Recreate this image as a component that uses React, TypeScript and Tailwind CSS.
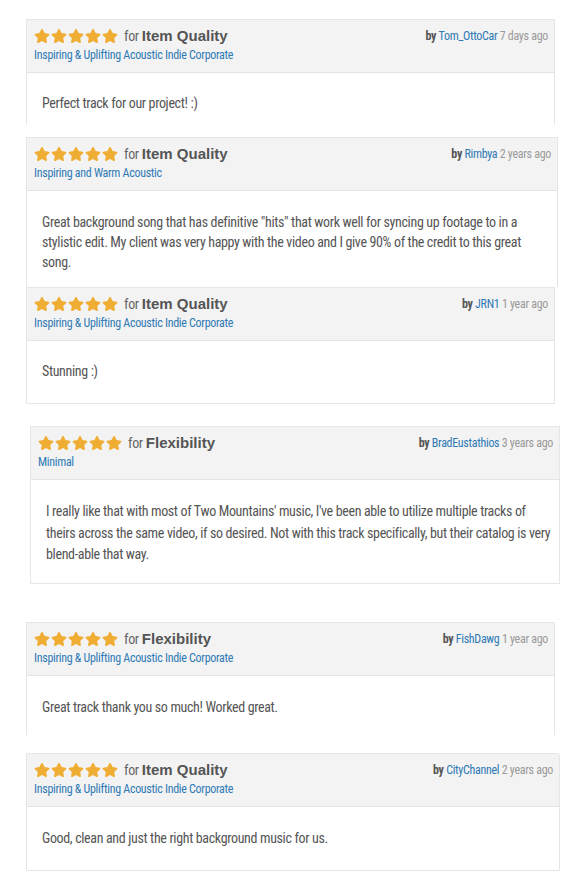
import { FaStar } from "react-icons/fa";

interface IReview {
  id: number;
  aspect: string;
  track: string;
  author: string;
  when: string;
  body: string;
  box: string;
  bodyBox: string;
}

const reviews: IReview[] = [
  {
    id: 1,
    aspect: "Item Quality",
    track: "Inspiring & Uplifting Acoustic Indie Corporate",
    author: "Tom_OttoCar",
    when: "7 days ago",
    body: "Perfect track for our project! :)",
    box: "mt-[19px] ml-[26px] w-[529px] border-b-0",
    bodyBox: "h-[52px] pt-[20px] pr-[15px] leading-[20px]"
  },
  {
    id: 2,
    aspect: "Item Quality",
    track: "Inspiring and Warm Acoustic",
    author: "Rimbya",
    when: "2 years ago",
    body: 'Great background song that has definitive "hits" that work well for syncing up footage to in a stylistic edit. My client was very happy with the video and I give 90% of the credit to this great song.',
    box: "mt-[12px] ml-[26px] w-[532px] border-b-0",
    bodyBox: "h-[96px] pt-[21px] pr-[15px] leading-[20px]"
  },
  {
    id: 3,
    aspect: "Item Quality",
    track: "Inspiring & Uplifting Acoustic Indie Corporate",
    author: "JRN1",
    when: "1 year ago",
    body: "Stunning :)",
    box: "mt-0 ml-[26px] w-[529px]",
    bodyBox: "h-[62px] pt-[20px] pr-[15px] leading-[20px]"
  },
  {
    id: 4,
    aspect: "Flexibility",
    track: "Minimal",
    author: "BradEustathios",
    when: "3 years ago",
    body: "I really like that with most of Two Mountains' music, I've been able to utilize multiple tracks of theirs across the same video, if so desired. Not with this track specifically, but their catalog is very blend-able that way.",
    box: "mt-[22px] ml-[30px] w-[530px]",
    bodyBox: "h-[103px] pt-[21px] pr-[6px] leading-[21.5px]"
  },
  {
    id: 5,
    aspect: "Flexibility",
    track: "Inspiring & Uplifting Acoustic Indie Corporate",
    author: "FishDawg",
    when: "1 year ago",
    body: "Great track thank you so much! Worked great.",
    box: "mt-[38px] ml-[26px] w-[529px] border-b-0",
    bodyBox: "h-[59px] pt-[21px] pr-[15px] leading-[20px]"
  },
  {
    id: 6,
    aspect: "Item Quality",
    track: "Inspiring & Uplifting Acoustic Indie Corporate",
    author: "CityChannel",
    when: "2 years ago",
    body: "Good, clean and just the right background music for us.",
    box: "mt-[18px] ml-[26px] w-[534px] rounded-tr-[3px]",
    bodyBox: "h-[63px] pt-[21px] pr-[15px] leading-[20px]"
  }
];

const Stars = () => (
  <span className="flex items-center gap-[1px] text-[#f0ad33]">
    {[0, 1, 2, 3, 4].map((i) => (
      <FaStar key={i} className="h-[16px] w-[16px]" />
    ))}
  </span>
);

const ReviewCard = ({ review }: { review: IReview }) => (
  <div className={`border border-[#e6e6e6] bg-white ${review.box}`}>
    <div className="flex h-[53px] justify-between border-b border-[#dfe6ea] bg-[#f3f3f3] pl-[7px] pr-[6px] pt-[6px]">
      <div>
        <div className="flex h-[20px] items-center">
          <Stars />
          <span className="ml-[6px] text-[14px] text-[#666]">for</span>
          <span className="ml-[3px] text-[15px] font-bold tracking-normal text-[#555] [font-family:'Liberation_Sans',Arial,sans-serif]">
            {review.aspect}
          </span>
        </div>
        <a href="#" className="block text-[12px] leading-[18px] text-[#2f7ab5]">
          {review.track}
        </a>
      </div>
      <div className="text-[12px] leading-[20px] text-[#9a9a9a]">
        <span className="font-bold text-[#555]">by </span>
        <a href="#" className="text-[#2f7ab5]">
          {review.author}
        </a>{" "}
        {review.when}
      </div>
    </div>
    <div className={`pl-[15px] text-[14px] tracking-[-0.35px] text-[#555] ${review.bodyBox}`}>
      {review.body}
    </div>
  </div>
);

const App = () => {
  return (
    <div className="min-h-screen bg-white pb-4 tracking-[-0.3px] [font-family:'Roboto_Condensed','Liberation_Sans',sans-serif]">
      {reviews.map((r) => (
        <ReviewCard key={r.id} review={r} />
      ))}
    </div>
  );
};

export default App;
